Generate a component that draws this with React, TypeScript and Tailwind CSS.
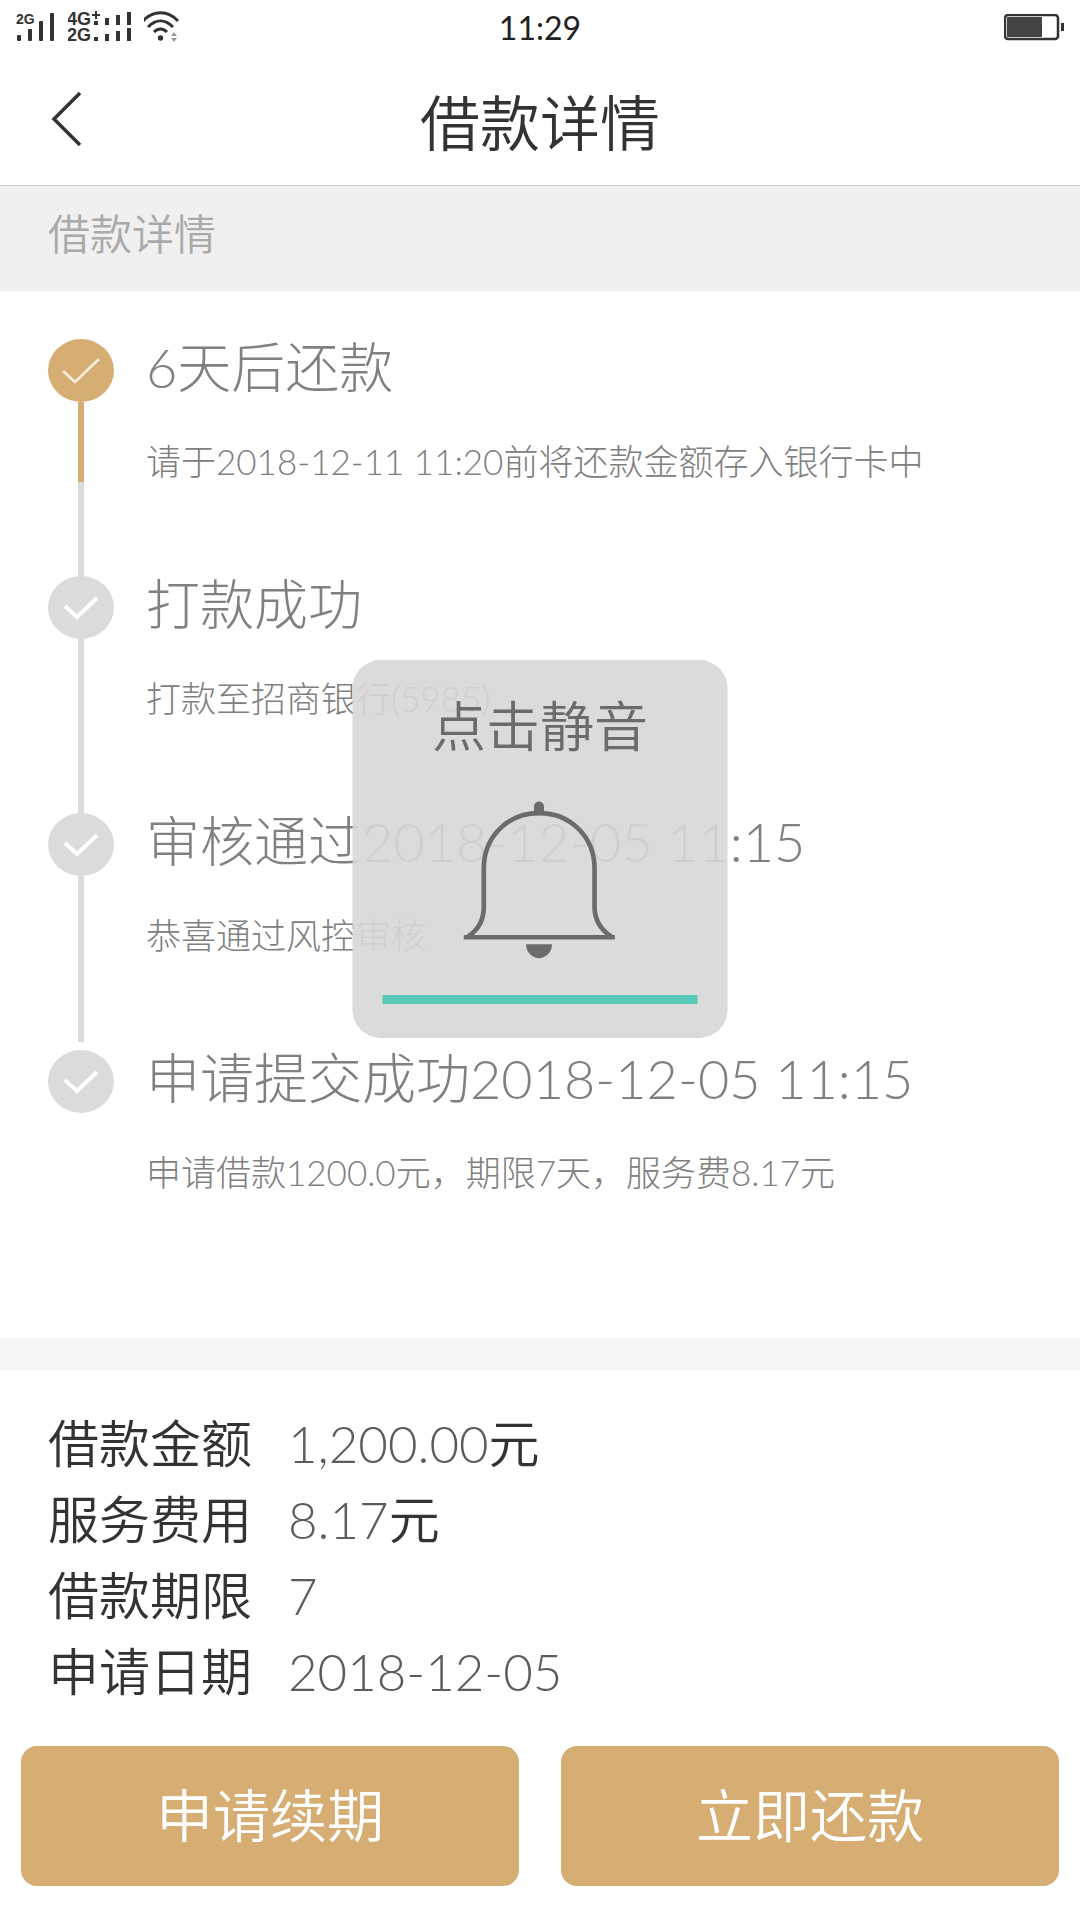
type Step = {
  title: string;
  desc: string;
  current?: boolean;
};

const steps: Step[] = [
  {
    title: "6天后还款",
    desc: "请于2018-12-11 11:20前将还款金额存入银行卡中",
    current: true,
  },
  { title: "打款成功", desc: "打款至招商银行(5985)" },
  { title: "审核通过2018-12-05 11:15", desc: "恭喜通过风控审核" },
  {
    title: "申请提交成功2018-12-05 11:15",
    desc: "申请借款1200.0元，期限7天，服务费8.17元",
  },
];

const details = [
  { label: "借款金额", value: "1,200.00", unit: "元" },
  { label: "服务费用", value: "8.17", unit: "元" },
  { label: "借款期限", value: "7", unit: "" },
  { label: "申请日期", value: "2018-12-05", unit: "" },
];

const StatusBar = () => {
  return (
    <div className="grid h-14 grid-cols-3 items-center px-4 text-[#333]">
      <div className="flex items-center gap-3">
        <svg className="h-9 w-10" viewBox="0 -2 40 36" fill="currentColor">
          <text x="0" y="12" fontSize="14" fontWeight="700" fontFamily="Liberation Sans, sans-serif">
            2G
          </text>
          <rect x="1" y="23" width="4" height="6" rx="1" />
          <rect x="12" y="17" width="4" height="12" rx="1" />
          <rect x="23" y="9" width="4" height="20" rx="1" />
          <rect x="34" y="1" width="4" height="28" rx="1" />
        </svg>
        <svg className="h-9 w-16" viewBox="0 -2 64 36" fill="currentColor">
          <g fontWeight="700" fontFamily="Liberation Sans, sans-serif" fontSize="18">
            <text x="-1" y="13">4G</text>
            <text x="-1" y="29">2G</text>
          </g>
          <path d="M24 2h3v-3h2v3h3v2h-3v3h-2v-3h-3z" />
          <rect x="26" y="9" width="4" height="4" />
          <rect x="37" y="6" width="4" height="7" />
          <rect x="48" y="3" width="4" height="10" />
          <rect x="59" y="0" width="4" height="13" />
          <rect x="26" y="25" width="4" height="4" />
          <rect x="37" y="22" width="4" height="7" />
          <rect x="48" y="19" width="4" height="10" />
          <rect x="59" y="16" width="4" height="13" />
        </svg>
        <svg className="h-9 w-10" viewBox="2 -1 40 36" fill="none" stroke="currentColor">
          <path d="M1 10C11 -1 26 -1 36 10" strokeWidth="3" />
          <path d="M6 16C14 8 23 8 31 16" strokeWidth="3" />
          <path d="M12 21C16 17 21 17 25 21" strokeWidth="3" />
          <circle cx="18.500" cy="27" r="2.700" fill="currentColor" stroke="none" />
          <path d="M29 25l3-4 3 4zM29 27l3 4 3-4z" fill="#999" stroke="none" />
        </svg>
      </div>
      <time className="text-center text-[32px] leading-10 font-normal text-[#222]">11:29</time>
      <svg className="h-7 w-15 justify-self-end" viewBox="0 0 60 28" fill="currentColor">
        <rect x="1" y="1" width="53" height="24" rx="3" fill="none" stroke="currentColor" strokeWidth="2.500" />
        <rect x="3" y="3" width="35" height="20" fill="#444" />
        <rect x="57" y="9" width="3" height="8" />
      </svg>
    </div>
  );
};

const Header = () => {
  return (
    <header className="grid h-[130px] grid-cols-3 items-center border-b border-[#ccc] px-12">
      <button aria-label="返回" className="mb-1 w-10 text-[#333]">
        <svg className="h-14 w-10" viewBox="0 0 40 56" fill="none" stroke="currentColor" strokeWidth="3.500">
          <path d="M32 2L6 28L32 54" />
        </svg>
      </button>
      <h1 className="pt-1 text-center text-[60px] leading-[84px] font-[350] whitespace-nowrap text-[#333]">借款详情</h1>
    </header>
  );
};

const Timeline = () => {
  return (
    <ol className="px-12 pt-12">
      {steps.map((step, i) => (
        <li key={step.title} className="flex h-[237px] gap-8">
          <div className="flex w-[66px] flex-col items-center">
            <span
              className={`flex h-[63px] w-[66px] shrink-0 items-center justify-center rounded-[50%] ${
                step.current ? "bg-[#d6ae73]" : "bg-[#dbdbdb]"
              }`}
            >
              {step.current ? (
                <svg className="h-7 w-10" viewBox="0 0 40 28" fill="none" stroke="#fbf0dc" strokeWidth="2.500">
                  <path d="M2 14L14 25L38 2" />
                </svg>
              ) : (
                <svg className="h-7 w-10" viewBox="0 0 40 28" fill="none" stroke="#fff" strokeWidth="4">
                  <path d="M4 12L16 23L36 4" />
                </svg>
              )}
            </span>
            {step.current && <span className="h-20 w-1.5 bg-[#d6ae73]" />}
            {i < steps.length - 1 && (
              <span className={`w-1.5 flex-1 bg-[#dbdbdb] ${i === steps.length - 2 ? "mb-2" : ""}`} />
            )}
          </div>
          <div className="flex flex-col gap-10 whitespace-nowrap text-[#808080]">
            <h2 className="text-[54px] leading-[58px]">{step.title}</h2>
            <p className="text-[35px] leading-[48px]">{step.desc}</p>
          </div>
        </li>
      ))}
    </ol>
  );
};

const MuteDialog = () => {
  return (
    <button className="absolute top-[660px] left-1/2 flex h-[378px] w-[375px] -translate-x-1/2 flex-col items-center rounded-[28px] bg-[#d7d7d7]/90 px-[30px] pt-8 text-[#6b6b6b]">
      <span className="text-[54px] leading-[70px] font-[350]">点击静音</span>
      <svg className="mt-[39px] h-[158px] w-[154px]" viewBox="370 482 463 474" fill="none" stroke="currentColor">
        <path d="M582 520v-22a15 15 0 0 1 30 0v22z" fill="currentColor" stroke="none" />
        <path
          d="M384 889C418 866 431 834 431 800V685C431 588 503 518 597 518C691 518 764 588 764 685V800C764 836 780 866 814 889"
          strokeWidth="14"
        />
        <path d="M370 884H825V898H370z" fill="currentColor" stroke="none" />
        <path d="M558 912h78a39 42 0 0 1-78 0z" fill="currentColor" stroke="none" />
      </svg>
      <span className="mt-9 h-[9px] w-full bg-[#57cbb7]" />
    </button>
  );
};

const LoanDetails = () => {
  return (
    <dl className="px-12 pt-9">
      {details.map((item) => (
        <div key={item.label} className="flex h-[76px] items-center text-[51px] whitespace-nowrap text-[#333]">
          <dt className="w-60 font-[350]">{item.label}</dt>
          <dd className="font-[350]">
            <span className="font-light text-[#5c5c5c]">{item.value}</span>
            {item.unit}
          </dd>
        </div>
      ))}
    </dl>
  );
};

const App = () => {
  return (
    <main className="relative min-h-screen bg-white font-['Lato','Noto_Sans_CJK_SC',sans-serif] font-light">
      <StatusBar />
      <Header />
      <div className="h-[105px] bg-[#f0f0f0] px-12 pt-[18px]">
        <p className="text-[42px] leading-[60px] font-[350] text-[#aaa]">借款详情</p>
      </div>
      <Timeline />
      <div className="mt-[51px] h-8 bg-[#f6f6f6]" />
      <LoanDetails />
      <div className="grid grid-cols-2 gap-[42px] px-[21px] pt-9 pb-8">
        <button className="h-[140px] rounded-2xl bg-[#d6ae73] text-[57px] font-[350] text-white">申请续期</button>
        <button className="h-[140px] rounded-2xl bg-[#d6ae73] text-[57px] font-[350] text-white">立即还款</button>
      </div>
      <MuteDialog />
    </main>
  );
};

export default App;
